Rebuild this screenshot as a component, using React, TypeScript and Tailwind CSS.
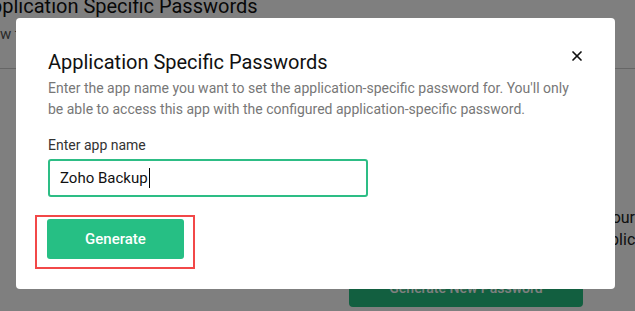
import { X } from 'lucide-react'

const font = { fontFamily: 'Roboto, "Liberation Sans", sans-serif' }

const BackgroundPage = () => (
  <div className="w-[635px] h-[311px] overflow-hidden bg-white">
    <h1 className="ml-[-22px] mt-[-8px] text-[20px] leading-[28px] text-[#111]">Application Specific Passwords</h1>
    <p className="mt-[4px] whitespace-nowrap text-[15px] leading-[20px] text-[#555]">
      w to generate passwords for applications and devices that cannot use two-factor and o
    </p>
    <div className="mt-[24px] border-t border-[#ccc]" />
    <div className="mt-[138px] flex pl-[361px]">
      <div className="w-[274px] whitespace-nowrap text-base leading-[22px] text-[#222]">
        <p>Use these passwords to sign in to your account</p>
        <p>for third-party mail and calendar applications.</p>
      </div>
    </div>
    <div className="mt-[18px] pl-[349px]">
      <button className="h-[38px] w-[234px] rounded bg-[#24bf80] text-sm font-medium text-white">
        Generate New Password
      </button>
    </div>
  </div>
)

export default function App() {
  return (
    <div className="relative w-[635px] h-[311px] overflow-hidden" style={font}>
      <BackgroundPage />
      <div className="absolute inset-0 bg-black/50">
        <div className="absolute left-[16px] top-[18px] w-[599px] h-[271px] rounded bg-white pl-[32px] pr-[32px] pt-[30px]">
          <div className="flex items-start justify-between">
            <h2 className="text-[20px] leading-[28px] text-[#111]">Application Specific Passwords</h2>
            <button className="mr-[-2px] mt-[0px] text-[#111]">
              <X size={16} strokeWidth={2.6} />
            </button>
          </div>
          <p className="mt-[2px] text-sm leading-[21px] text-[#777]">
            Enter the app name you want to set the application-specific password for. You'll only be able to access this app with the configured application-specific password.
          </p>
          <label className="mt-[15px] block text-sm leading-[20px] text-[#333]">Enter app name</label>
          <div className="mt-[4px] flex h-[38px] w-[320px] items-center rounded-[3px] border-2 border-[#2dbd85] pl-[10px]">
            <span className="text-[15px] text-[#111]">Zoho Backup</span>
            <span className="ml-[1px] h-[20px] w-[1px] bg-black" />
          </div>
          <div className="ml-[-13px] mt-[18px] inline-block border-2 border-[#f24848] pb-[8px] pl-[10px] pr-[9px] pt-[2px]">
            <button className="h-[40px] w-[137px] rounded-[3px] bg-[#26bf84] text-[15px] font-medium text-white">
              Generate
            </button>
          </div>
        </div>
      </div>
    </div>
  )
}
